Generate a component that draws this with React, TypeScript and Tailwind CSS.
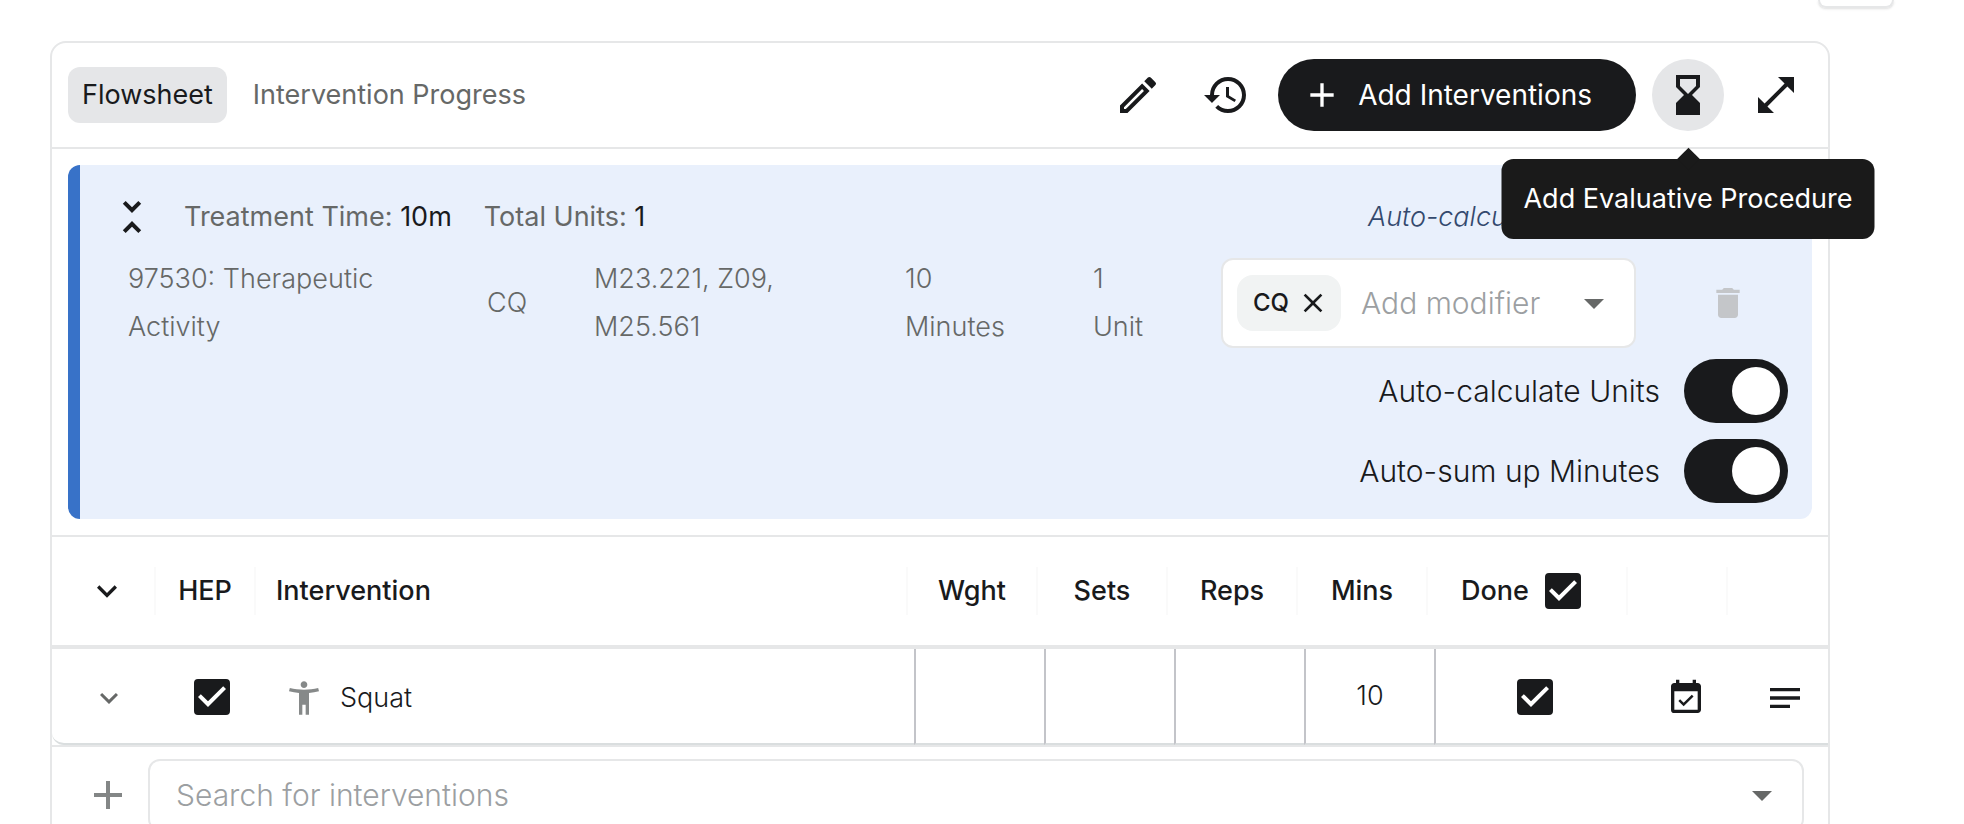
import { useState, type ReactNode } from 'react';
import {
  MdAccessibilityNew,
  MdAdd,
  MdArrowDropDown,
  MdClose,
  MdDelete,
  MdEventAvailable,
  MdExpandMore,
  MdHistory,
  MdHourglassBottom,
  MdNotes,
  MdOpenInFull,
  MdOutlineEdit,
  MdUnfoldLess,
} from 'react-icons/md';

const Checkbox = ({ label }: { label: string }) => (
  <span className="inline-grid size-9 shrink-0 align-middle">
    <input
      type="checkbox"
      aria-label={label}
      defaultChecked
      className="peer col-start-1 row-start-1 size-9 appearance-none rounded border-4 border-[#191a1c] checked:bg-[#191a1c]"
    />
    <svg
      viewBox="3 3 18 18"
      className="pointer-events-none col-start-1 row-start-1 hidden size-9 fill-white peer-checked:block"
    >
      <path d="M10 17l-5-5 1.41-1.41L10 14.17l7.59-7.59L19 8l-9 9z" />
    </svg>
  </span>
);

const Toggle = ({ label }: { label: string }) => {
  const [on, setOn] = useState(true);

  return (
    <label className="flex items-center gap-6 text-[30px] leading-10 font-light text-[#191a1c]">
      {label}
      <input
        type="checkbox"
        role="switch"
        checked={on}
        onChange={() => setOn(!on)}
        className="h-16 w-[104px] appearance-none rounded-full bg-gray-400 p-2 before:block before:size-12 before:rounded-full before:bg-white checked:bg-[#191a1c] checked:before:ml-10"
      />
    </label>
  );
};

const IconButton = ({ label, active, children }: { label: string; active?: boolean; children: ReactNode }) => (
  <button
    type="button"
    aria-label={label}
    className={`flex size-[72px] items-center justify-center rounded-full text-5xl ${active ? 'bg-[#e5e6e8]' : ''}`}
  >
    {children}
  </button>
);

const HeadCell = ({ first, children }: { first?: boolean; children?: ReactNode }) => (
  <th scope="col" className="h-28 border-b-4 border-[#e6e7e8] p-0 font-[450]">
    <div
      className={`mr-1.5 flex h-12 items-center justify-center gap-4 border-r-2 border-[#fafafa] ${first ? 'pl-2' : '-ml-1.5'}`}
    >
      {children}
    </div>
  </th>
);

const valueCell = 'border-b-2 border-l-2 border-b-[#dadedf] border-l-[#c3c4c9] p-0 text-center';
const plainCell = 'border-b-2 border-[#dadedf] p-0 text-center';
const valueInput = 'h-full w-full bg-transparent pt-1 text-center font-light outline-none';

const App = () => (
  <div className="h-screen overflow-hidden bg-white font-['Inter',sans-serif] text-[27px] text-[#191a1c]">
    <div className="flex justify-end pr-[70px]">
      <div className="h-2 w-[76px] rounded-b-xl border-2 border-t-0 border-[#e6e7e8] shadow-sm" />
    </div>

    <main className="mt-[33px] mr-[134px] ml-[50px] rounded-t-2xl border-2 border-[#e6e7e8]">
      <header className="flex items-center justify-between border-b-2 border-[#e6e7e8] p-4">
        <nav className="flex gap-3">
          <button type="button" className="h-14 rounded-xl bg-[#e5e6e8] px-3.5">
            Flowsheet
          </button>
          <button type="button" className="h-14 rounded-xl px-3.5 text-[#666867]">
            Intervention Progress
          </button>
        </nav>

        <div className="flex gap-4">
          <IconButton label="Edit">
            <MdOutlineEdit />
          </IconButton>
          <IconButton label="History">
            <MdHistory />
          </IconButton>
          <button
            type="button"
            className="flex h-[72px] items-center gap-4 rounded-full bg-[#191a1c] pr-11 pl-6 text-[28px] text-white"
          >
            <MdAdd className="text-[40px]" />
            Add Interventions
          </button>
          <div className="relative">
            <IconButton label="Add Evaluative Procedure" active>
              <MdHourglassBottom />
            </IconButton>
            <div
              role="tooltip"
              className="absolute top-[100px] left-1/2 z-10 -translate-x-1/2 rounded-xl bg-[#1a1a1a] px-[22px] py-5 leading-10 whitespace-nowrap text-white"
            >
              <span className="absolute -top-2 left-1/2 size-4 -translate-x-1/2 rotate-45 bg-[#1a1a1a]" />
              Add Evaluative Procedure
            </div>
          </div>
          <IconButton label="Full screen">
            <MdOpenInFull />
          </IconButton>
        </div>
      </header>

      <section className="m-4 rounded-xl border-l-[12px] border-[#3872c8] bg-[#e9f0fc] pt-7 pr-6 pb-4 pl-7">
        <div className="flex h-12 items-center text-[#666867]">
          <button type="button" aria-label="Collapse" className="mr-7 text-5xl text-[#191a1c]">
            <MdUnfoldLess />
          </button>
          <p className="mr-8">
            Treatment Time: <span className="text-[#191a1c]">10m</span>
          </p>
          <p>
            Total Units: <span className="text-[#191a1c]">1</span>
          </p>
          <p className="ml-auto w-[420px] font-light text-[#34496e] italic">Auto-calculated</p>
        </div>

        {/* Billed code */}
        <div className="mt-3.5 mb-2 flex items-center pl-5 leading-12 font-light text-[#666867]">
          <p className="w-[359px] pr-20">97530: Therapeutic Activity</p>
          <p className="w-[107px]">CQ</p>
          <p className="w-[311px] pr-24">M23.221, Z09, M25.561</p>
          <p className="w-[188px] pr-16">10 Minutes</p>
          <p className="w-16">1 Unit</p>
          <div className="ml-auto flex h-[90px] w-[415px] items-center rounded-xl border-2 border-[#e6e7e8] bg-white pr-4 pl-3.5">
            <span className="flex h-14 shrink-0 items-center gap-2 rounded-2xl bg-[#f1f3f3] pr-3 pl-4 text-2xl font-medium text-[#191a1c]">
              CQ
              <button type="button" aria-label="Remove CQ" className="text-[32px]">
                <MdClose />
              </button>
            </span>
            <input
              aria-label="Add modifier"
              placeholder="Add modifier"
              className="ml-5 min-w-0 flex-1 text-[30px] outline-none placeholder:text-[#9c9fa2]"
            />
            <button type="button" aria-label="Show modifiers" className="text-5xl text-[#666867]">
              <MdArrowDropDown />
            </button>
          </div>
          <button type="button" aria-label="Delete" className="mr-10 ml-[72px] text-[40px] text-[#c4c6c9]">
            <MdDelete />
          </button>
        </div>

        <div className="flex flex-col items-end gap-4">
          <Toggle label="Auto-calculate Units" />
          <Toggle label="Auto-sum up Minutes" />
        </div>
      </section>

      <table className="w-full table-fixed border-separate border-spacing-0 border-t-2 border-[#e6e7e8]">
        <colgroup>
          <col className="w-[110px]" />
          <col className="w-[100px]" />
          <col />
          <col className="w-[130px]" />
          <col className="w-[130px]" />
          <col className="w-[130px]" />
          <col className="w-[130px]" />
          <col className="w-[200px]" />
          <col className="w-[100px]" />
          <col className="w-[94px]" />
        </colgroup>
        <thead>
          <tr>
            <HeadCell first>
              <button type="button" aria-label="Expand all" className="text-[40px]">
                <MdExpandMore />
              </button>
            </HeadCell>
            <HeadCell>HEP</HeadCell>
            <HeadCell>
              <span className="flex-1 pl-5 text-left">Intervention</span>
            </HeadCell>
            <HeadCell>Wght</HeadCell>
            <HeadCell>Sets</HeadCell>
            <HeadCell>Reps</HeadCell>
            <HeadCell>Mins</HeadCell>
            <HeadCell>
              <span className="flex items-center gap-4 pr-3">
                Done
                <Checkbox label="All done" />
              </span>
            </HeadCell>
            <HeadCell />
            <th className="border-b-4 border-[#e6e7e8]" />
          </tr>
        </thead>
        <tbody>
          <tr className="h-24">
            <td className={`${plainCell} rounded-bl-xl`}>
              <button type="button" aria-label="Expand Squat" className="block w-full pt-1 pl-1 text-4xl text-[#666867]">
                <MdExpandMore className="mx-auto" />
              </button>
            </td>
            <td className={plainCell}>
              <Checkbox label="HEP" />
            </td>
            <td className="border-b-2 border-[#dadedf] p-0">
              <div className="flex items-center gap-4 pt-1 pl-[22px] font-light">
                <MdAccessibilityNew className="text-[40px] text-[#868989]" />
                Squat
              </div>
            </td>
            <td className={valueCell}>
              <input aria-label="Weight" className={valueInput} />
            </td>
            <td className={valueCell}>
              <input aria-label="Sets" className={valueInput} />
            </td>
            <td className={valueCell}>
              <input aria-label="Reps" className={valueInput} />
            </td>
            <td className={valueCell}>
              <input aria-label="Minutes" defaultValue="10" className={valueInput} />
            </td>
            <td className={valueCell}>
              <Checkbox label="Done" />
            </td>
            <td className={plainCell}>
              <button type="button" aria-label="Schedule" className="block w-full pt-1 pl-1 text-[40px]">
                <MdEventAvailable className="mx-auto" />
              </button>
            </td>
            <td className={plainCell}>
              <button type="button" aria-label="Notes" className="block w-full pt-1 pl-2 text-[40px]">
                <MdNotes className="mx-auto" />
              </button>
            </td>
          </tr>
        </tbody>
      </table>

      <div className="flex items-center border-t-2 border-[#e6e7e8] py-3 pr-6 pl-8">
        <MdAdd className="mr-4 shrink-0 text-5xl text-[#838686]" />
        <div className="flex h-[72px] flex-1 items-center rounded-xl border-2 border-[#e6e7e8] pr-4 pl-[26px]">
          <input
            aria-label="Search for interventions"
            placeholder="Search for interventions"
            className="min-w-0 flex-1 text-[30px] font-light outline-none placeholder:text-[#9c9fa2]"
          />
          <button type="button" aria-label="Show interventions" className="text-5xl text-[#666867]">
            <MdArrowDropDown />
          </button>
        </div>
      </div>
    </main>
  </div>
);

export default App;
